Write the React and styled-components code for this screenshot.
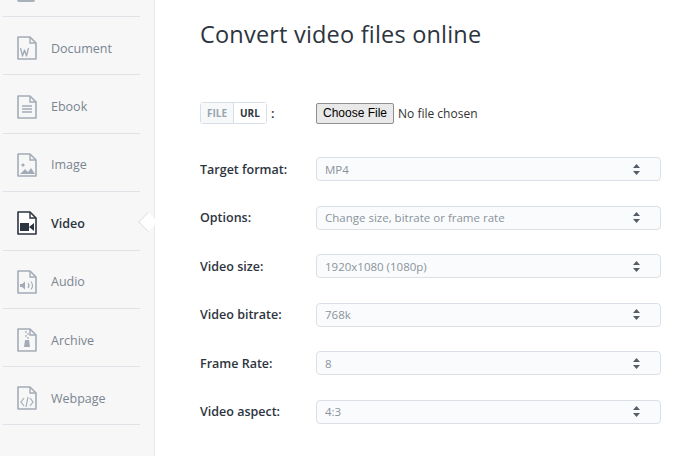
import React from "react";
import styled, { createGlobalStyle } from "styled-components";

const G = createGlobalStyle`
  html,body{margin:0;padding:0;background:#fff;overflow:hidden;}
  body{font-family:"Open Sans",sans-serif;}
`;
const Page = styled.div`display:flex;width:700px;height:456px;`;
const Side = styled.div`width:155px;flex:none;background:#f7f7f7;border-right:1px solid #e6e8ea;position:relative;padding-top:16px;box-sizing:border-box;`;
const TopCut = styled.div`position:absolute;top:-20px;left:17px;width:18px;height:22px;border:2px solid #a8b0b9;border-radius:2px;box-sizing:border-box;`;
const Item = styled.div`
  height:58.4px;box-sizing:border-box;margin:0 14px 0 3px;border-top:1px solid #dfe3e8;display:flex;align-items:center;gap:14px;padding:5px 0 0 14px;
  font-size:12.5px;color:${p=>p.active?"#2b3440":"#7a8591"};font-weight:${p=>p.active?600:400};position:relative;
  &:last-child{border-bottom:1px solid #dfe3e8;}
`;
const Arrow = styled.div`position:absolute;right:-15px;top:23px;width:13px;height:13px;background:#fff;border-left:1px solid #e0e3e6;border-bottom:1px solid #e0e3e6;transform:rotate(45deg);`;
const Main = styled.div`flex:1;padding:18px 39px 0 45px;`;
const Title = styled.h1`margin:0 0 51px;font-weight:400;font-size:23.5px;color:#2d3440;letter-spacing:0.2px;`;
const Row = styled.div`display:flex;align-items:center;height:24px;margin-bottom:24.6px;`;
const Label = styled.div`width:116px;font-size:12.5px;font-weight:600;color:#2d3440;`;
const Toggle = styled.div`display:flex;border:1px solid #d9dfe6;border-radius:3px;height:20px;font-size:10px;font-weight:700;`;
const Tog = styled.div`padding:0 6px;display:flex;align-items:center;color:${p=>p.on?"#2d3440":"#9aa4ae"};background:${p=>p.on?"#fff":"#f6f8fa"};& + &{border-left:1px solid #d9dfe6;}`;
const Colon = styled.span`margin-left:4px;font-weight:600;color:#2d3440;font-size:13px;`;
const FileBtn = styled.div`height:19px;padding:0 6px;border:1px solid #8f8f8f;border-radius:2px;background:#e9e9e9;font-family:"Liberation Sans",Arial,sans-serif;font-size:12px;display:flex;align-items:center;color:#000;`;
const FileText = styled.span`margin-left:4px;font-size:12px;color:#333;`;
const Select = styled.div`flex:1;height:24px;border:1px solid #dbe0e6;border-radius:4px;background:#fafbfc;box-sizing:border-box;display:flex;align-items:center;justify-content:space-between;padding:0 20px 0 8px;font-size:11.5px;color:#8a939c;`;

const Doc = ({children, dark}) => {
  const c = dark ? "#2b3440" : "#a3acb6";
  return (
    <svg width="20" height="24" viewBox="0 0 20 24" fill="none">
      <path d="M1 1h12l6 6v16H1z" stroke={c} strokeWidth="1.6" fill={dark?"#fff":"none"} strokeLinejoin="round"/>
      <path d="M13 1v6h6" stroke={c} strokeWidth="1.4"/>
      {children(c)}
    </svg>
  );
};
const icons = {
  Document: c => <path d="M3.5 12l2 8 2-6 2 6 2-8" stroke={c} strokeWidth="1.3" strokeLinejoin="round"/>,
  Ebook: c => <path d="M5 11h10M5 14h10M5 17h10" stroke={c} strokeWidth="1.3"/>,
  Image: c => <><circle cx="6" cy="12" r="1.6" fill={c}/><path d="M3 21l5-5 3 3 3-4 4 6z" fill={c}/></>,
  Video: c => <><rect x="3" y="12" width="9" height="8" fill={c}/><path d="M12 16l5-4v8z" fill={c}/></>,
  Audio: c => <><path d="M3 14h2l3-2.5v8L5 17H3z" fill={c}/><path d="M11 13q2 2.5 0 5M14 11.5q3 4 0 8" stroke={c} strokeWidth="1.1"/></>,
  Archive: c => <><path d="M9 3v2M11 5v2M9 7v2M11 9v2" stroke={c} strokeWidth="1.2"/><path d="M8 12h4l1 7H7z" fill={c}/></>,
  Webpage: c => <path d="M7 12l-3 4 3 4M13 12l3 4-3 4M11 11l-2 10" stroke={c} strokeWidth="1.2"/>,
};
const names = ["Document","Ebook","Image","Video","Audio","Archive","Webpage"];
const rows = [["Target format:","MP4"],["Options:","Change size, bitrate or frame rate"],["Video size:","1920x1080 (1080p)"],["Video bitrate:","768k"],["Frame Rate:","8"],["Video aspect:","4:3"]];
const Caret = () => (<svg width="7" height="11" viewBox="0 0 7 11"><path d="M3.5 0L7 4H0z M0 7h7l-3.5 4z" fill="#555d66"/></svg>);

export default function App(){
  return (<><G/><Page>
    <Side><TopCut/>
      {names.map(n=>(
        <Item key={n} active={n==="Video"}>
          <Doc dark={n==="Video"}>{icons[n]}</Doc>{n}{n==="Video"&&<Arrow/>}
        </Item>))}
    </Side>
    <Main>
      <Title>Convert video files online</Title>
      <Row style={{marginBottom:"32px"}}>
        <Label style={{display:"flex",alignItems:"center"}}><Toggle><Tog>FILE</Tog><Tog on>URL</Tog></Toggle><Colon>:</Colon></Label>
        <FileBtn>Choose File</FileBtn><FileText>No file chosen</FileText>
      </Row>
      {rows.map(([l,v])=>(
        <Row key={l}><Label>{l}</Label><Select>{v}<Caret/></Select></Row>
      ))}
    </Main>
  </Page></>);
}
